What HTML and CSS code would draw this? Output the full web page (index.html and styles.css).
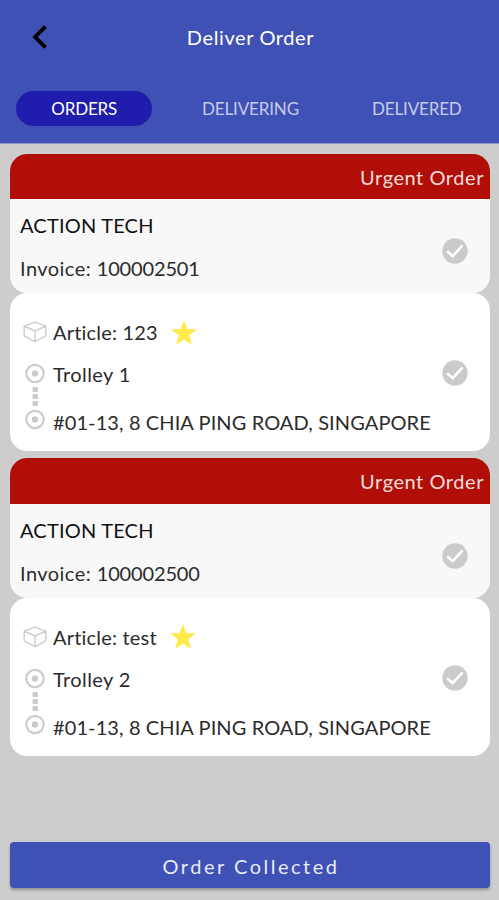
FILE: index.html
```
<!DOCTYPE html>
<html lang="en">
<head>
  <meta charset="UTF-8">
  <title>Deliver Order</title>
  <meta name="viewport" content="width=device-width, initial-scale=1.0">
  <link rel="stylesheet" href="styles.css">
</head>
<body>
  <!-- Shared icons -->
  <svg class="icon-defs" aria-hidden="true">
    <symbol id="icon-check" viewBox="0 0 26 26">
      <circle cx="13" cy="13" r="12.7" fill="#cbcbcb"/>
      <path d="M5.2 13.2l5.4 5 10-10.8" fill="none" stroke="#fff" stroke-width="2.6"/>
    </symbol>
    <symbol id="icon-box" viewBox="0 0 24 22">
      <path d="M12 1.2L22.8 5.2V14.8L12 20.6 1.2 14.8V5.2zM1.2 5.2L12 10l10.8-4.8M12 10v10.6" fill="none" stroke="#cdcdcd" stroke-width="1.4" stroke-linejoin="round"/>
    </symbol>
    <symbol id="icon-route" viewBox="0 0 20 67">
      <g fill="none" stroke="#cdcdcd" stroke-width="2.2">
        <circle cx="10" cy="10.5" r="8.7"/>
        <circle cx="10" cy="56.5" r="8.7"/>
      </g>
      <g fill="#cbcbcb">
        <circle cx="10" cy="10.5" r="3.2"/>
        <circle cx="10" cy="56.5" r="3.2"/>
        <rect x="7.5" y="24" width="5.5" height="5" rx="1"/>
        <rect x="7.5" y="31" width="5.5" height="5" rx="1"/>
        <rect x="7.5" y="38" width="5.5" height="5" rx="1"/>
      </g>
    </symbol>
    <symbol id="icon-star" viewBox="0 0 26 26">
      <path d="M13 .3l3.3 8.8 9.4.2-7.4 6.1 2.7 9.6-8-5.5L5 25l2.7-9.6L.3 9.3l9.4-.2z" fill="#ffe94b"/>
    </symbol>
  </svg>

  <header class="header">
    <div class="title-bar">
      <button type="button" class="back" aria-label="Back">
        <svg width="16" height="24" viewBox="0 0 16 24"><path d="M13.5 1.7L3 12l10.5 10.3" fill="none" stroke="#000" stroke-width="3.8"/></svg>
      </button>
      <h1 class="title">Deliver Order</h1>
    </div>
    <nav class="tabs">
      <a class="tab active"><span>ORDERS</span></a>
      <a class="tab"><span>DELIVERING</span></a>
      <a class="tab"><span>DELIVERED</span></a>
    </nav>
  </header>

  <main class="orders">
    <section class="order">
      <div class="order-head">
        <div class="urgent"><span>Urgent Order</span></div>
        <div class="summary">
          <div class="summary-text">
            <h2 class="customer">ACTION TECH</h2>
            <p class="invoice">Invoice: <span class="number">100002501</span></p>
          </div>
          <svg class="check"><use href="#icon-check"/></svg>
        </div>
      </div>
      <div class="details">
        <div class="icons">
          <svg class="box"><use href="#icon-box"/></svg>
          <svg class="route"><use href="#icon-route"/></svg>
        </div>
        <div class="lines">
          <p class="article"><span class="article-name">Article: 123</span><svg class="star"><use href="#icon-star"/></svg></p>
          <p class="trolley">Trolley 1</p>
          <p class="address">#01-13, 8 CHIA PING ROAD, SINGAPORE</p>
        </div>
        <svg class="check"><use href="#icon-check"/></svg>
      </div>
    </section>

    <section class="order">
      <div class="order-head">
        <div class="urgent"><span>Urgent Order</span></div>
        <div class="summary">
          <div class="summary-text">
            <h2 class="customer">ACTION TECH</h2>
            <p class="invoice">Invoice: <span class="number">100002500</span></p>
          </div>
          <svg class="check"><use href="#icon-check"/></svg>
        </div>
      </div>
      <div class="details">
        <div class="icons">
          <svg class="box"><use href="#icon-box"/></svg>
          <svg class="route"><use href="#icon-route"/></svg>
        </div>
        <div class="lines">
          <p class="article"><span class="article-name">Article: test</span><svg class="star"><use href="#icon-star"/></svg></p>
          <p class="trolley">Trolley 2</p>
          <p class="address">#01-13, 8 CHIA PING ROAD, SINGAPORE</p>
        </div>
        <svg class="check"><use href="#icon-check"/></svg>
      </div>
    </section>
  </main>

  <footer class="footer">
    <button type="button" class="collect">Order Collected</button>
  </footer>
</body>
</html>
```

FILE: styles.css
```
* {
  box-sizing: border-box;
}
body {
  margin: 0;
  height: 100vh;
  display: flex;
  flex-direction: column;
  background: #cdcdcd;
  color: #2c2c2c;
  font-family: Lato, "Open Sans", sans-serif;
  font-size: 20px;
  font-variant-ligatures: none;
}
h1, h2, p {
  margin: 0;
  font-weight: normal;
}
.icon-defs {
  display: none;
}
.header {
  height: 144px;
  background: #3f51b5;
  border-bottom: 1px solid #8e96c6;
}
.title-bar {
  display: grid;
  grid-template-columns: 60px 1fr 60px;
  align-items: center;
  height: 74px;
}
.back {
  display: flex;
  padding: 0 0 0 32px;
  border: none;
  background: none;
  cursor: pointer;
}
.title {
  padding-left: 2px;
  color: #fff;
  font-size: 20px;
  line-height: 24px;
  text-align: center;
  letter-spacing: 0.6px;
}
.tabs {
  display: grid;
  grid-template-columns: repeat(3, 1fr);
  padding-top: 17px;
}
.tab {
  display: flex;
  align-items: center;
  justify-content: center;
  height: 35px;
  margin: 0 14px 0 16px;
  border-radius: 18px;
  color: #c5cae9;
  font-size: 17px;
  letter-spacing: -0.15px;
}
.tab.active {
  background: #201dac;
  color: #fff;
}
.orders {
  flex: 1;
  padding: 9.5px 9px 0 10px;
}
.order {
  margin-bottom: 7px;
}
.order-head {
  overflow: hidden;
  border-radius: 17px;
  background: #f8f8f8;
}
.urgent {
  display: flex;
  align-items: center;
  justify-content: flex-end;
  height: 45.5px;
  padding: 1px 6px 0 0;
  background: #b20e08;
  color: #f5dcda;
  letter-spacing: 0.55px;
}
.summary {
  display: flex;
  justify-content: space-between;
  height: 94px;
  padding: 14px 22px 0 10px;
}
.customer {
  color: #111;
  font-size: 20px;
  line-height: 24px;
  letter-spacing: 0.2px;
}
.invoice {
  margin-top: 19px;
  line-height: 24px;
  letter-spacing: 0.45px;
}
.number {
  letter-spacing: -0.15px;
}
.check {
  flex: none;
  width: 26px;
  height: 26px;
}
.summary .check {
  margin-top: 25px;
}
.details {
  display: flex;
  height: 158px;
  padding: 0 22px 0 12px;
  border-radius: 17px;
  background: #fff;
}
.icons {
  display: flex;
  flex-direction: column;
  align-items: center;
  width: 26px;
  padding-top: 28px;
}
.box {
  width: 24px;
  height: 22px;
}
.route {
  width: 20px;
  height: 67px;
  margin-top: 20px;
}
.lines {
  flex: 1;
  padding: 26px 0 0 5px;
  line-height: 26px;
  white-space: nowrap;
}
.article {
  display: flex;
  align-items: center;
  height: 26px;
  letter-spacing: 0.2px;
}
.star {
  width: 26px;
  height: 26px;
  margin: 1px 0 0 13px;
}
.trolley {
  margin-top: 16px;
  letter-spacing: 0.4px;
}
.address {
  margin-top: 22px;
  letter-spacing: 0.1px;
}
.details .check {
  margin-top: 67px;
}
.footer {
  padding: 0 9px 12px 10px;
}
.collect {
  display: block;
  width: 100%;
  height: 46px;
  padding: 1px 0 0 2px;
  border: none;
  border-radius: 4px;
  background: #3f51b5;
  color: #e8eaf6;
  font-family: inherit;
  font-size: 20px;
  letter-spacing: 2.5px;
  box-shadow: 0 2px 3px rgba(0,0,0,0.3);
  cursor: pointer;
}
```
